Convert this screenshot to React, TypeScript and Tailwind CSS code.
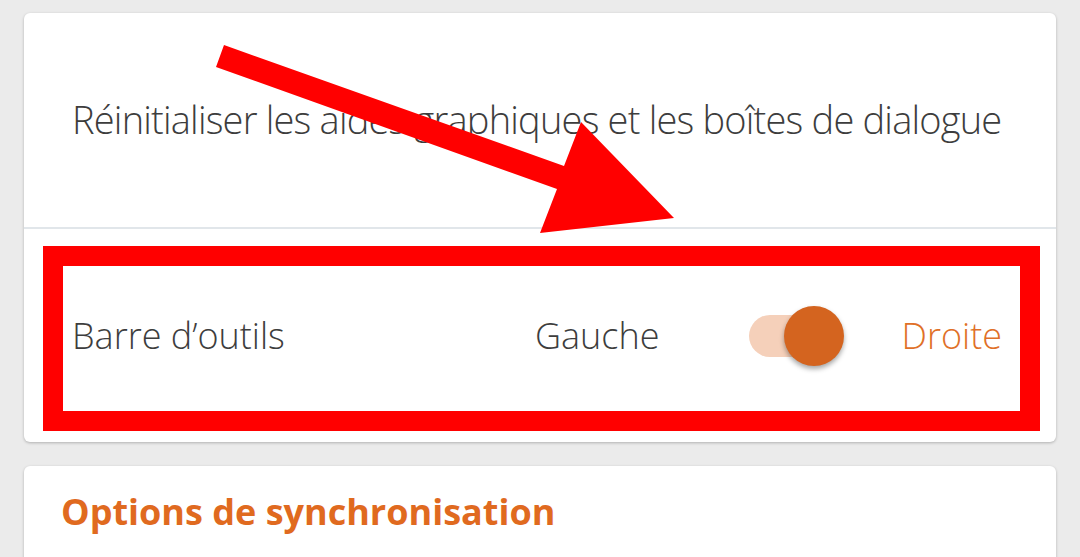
import React from 'react'

const Toggle = () => {
    return (
        <div className="relative w-[95px] h-[60px] flex items-center">
            <div className="w-[86px] h-[42px] rounded-full bg-[#f5d0ba]" />
            <div className="absolute right-0 top-0 w-[60px] h-[60px] rounded-full bg-[#d4641f] shadow-[0_3px_5px_rgba(0,0,0,0.35)]" />
        </div>
    )
}

const Arrow = () => (
    <svg className="absolute left-0 top-0 pointer-events-none" width="1080" height="557" viewBox="0 0 1080 557">
        <polygon
            fill="#ff0000"
            points="224,45 564,166 581,122 674,218 540,233 557,189 216,67"
        />
    </svg>
)

export default function App() {
    return (
        <div className="relative w-[1080px] h-[557px] overflow-hidden bg-[#ebebeb] px-[24px] pt-[13px]" style={{ fontFamily: '"Open Sans", sans-serif' }}>
            <div className="bg-white rounded-md shadow-[0_1px_3px_rgba(0,0,0,0.25)]">
                <div className="h-[214px] flex items-center pl-[48px] pb-[2px] text-[38px] font-light text-[#3d3d3d] tracking-[-0.021em]">
                    Réinitialiser les aides graphiques et les boîtes de dialogue
                </div>
                <div className="h-[2px] bg-[#e1e6ea]" />
                <div className="pl-[19px] pr-[16px] pt-[17px] pb-[11px]">
                    <div className="border-[20px] border-[#ff0000] h-[185px] flex items-center pl-[9px] pr-[18px] pb-[6px] text-[36px] font-light text-[#3d3d3d]">
                        <span className="flex-1">Barre d’outils</span>
                        <span>Gauche</span>
                        <div className="ml-[89px]"><Toggle /></div>
                        <span className="ml-[58px] text-[#e07028]">Droite</span>
                    </div>
                </div>
            </div>
            <div className="mt-[24px] bg-white rounded-md shadow-[0_1px_3px_rgba(0,0,0,0.25)] h-[120px] pl-[37px] pt-[22px]">
                <h2 className="text-[36px] font-bold text-[#e06a1f] leading-[48px]">Options de synchronisation</h2>
            </div>
            <Arrow />
        </div>
    )
}
